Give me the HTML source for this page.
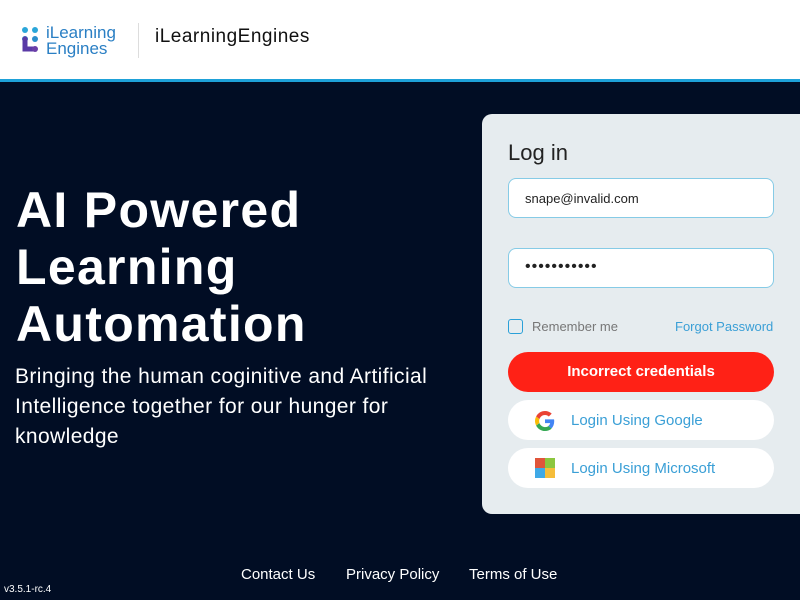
<!DOCTYPE html>
<html><head><meta charset="utf-8"><style>
*{margin:0;padding:0;box-sizing:border-box}
body{width:800px;height:600px;overflow:hidden;background:#010d24;font-family:"Liberation Sans",sans-serif;position:relative}
.hdr{position:absolute;left:0;top:0;width:800px;height:82px;background:#fff;border-bottom:3px solid #1ea1d8}
.abs{position:absolute}
.h1{left:16px;top:182px;color:#fff;font-weight:bold;font-size:50px;line-height:57px;letter-spacing:1.3px;white-space:nowrap}
.sub{left:15px;top:362px;color:#fff;font-size:21px;line-height:30px;width:445px;letter-spacing:0.4px}
.card{left:482px;top:114px;width:330px;height:400px;background:#e6ecef;border-radius:10px}
.inp{position:absolute;left:26px;width:266px;height:40px;background:#fff;border:1px solid #86cbe6;border-radius:8px;font-size:13px;color:#222;padding:12px 16px}
.btn{position:absolute;left:26px;width:266px;height:40px;border-radius:20px;font-size:15px}
</style></head><body>
<div class="hdr">
<svg class="abs" style="left:21px;top:27px" width="20" height="30" viewBox="0 0 20 30">
<circle cx="4" cy="3" r="3" fill="#2aa6d9"/><circle cx="14" cy="3" r="3" fill="#2aa6d9"/>
<circle cx="4" cy="12" r="3" fill="#2a7fc4"/><circle cx="14" cy="12" r="3" fill="#2a8fcc"/>
<path d="M4 12V22H14" stroke="#5a3aa6" stroke-width="5" fill="none" stroke-linecap="round"/>
<circle cx="14" cy="22" r="3" fill="#6b3fa8"/></svg>
<div class="abs" style="left:46px;top:25px;font-size:17px;line-height:16px;color:#2a7fc4">iLearning<br>Engines</div>
<div class="abs" style="left:138px;top:23px;width:1px;height:35px;background:#ddd"></div>
<div class="abs" style="left:155px;top:26px;font-size:19px;color:#111;letter-spacing:0.5px">iLearningEngines</div>
</div>
<div class="abs h1">AI Powered<br>Learning<br>Automation</div>
<div class="abs sub">Bringing the human coginitive and Artificial Intelligence together for our hunger for knowledge</div>
<div class="abs card">
<div class="abs" style="left:26px;top:26px;font-size:22px;color:#222">Log in</div>
<div class="inp" style="top:64px">snape@invalid.com</div>
<div class="inp" style="top:134px;font-size:16px;padding-top:9px;letter-spacing:1px">•••••••••••</div>
<div class="abs" style="left:26px;top:205px;width:15px;height:15px;border:1.5px solid #2aa0d8;border-radius:3px"></div>
<div class="abs" style="left:50px;top:205px;font-size:13px;color:#777">Remember me</div>
<div class="abs" style="left:193px;top:205px;font-size:13px;color:#3a9fd6">Forgot Password</div>
<div class="btn" style="top:238px;background:#ff2116;color:#fff;font-weight:bold;text-align:center;line-height:40px">Incorrect credentials</div>
<div class="btn" style="top:286px;background:#fff;color:#3a9fd6">
<svg class="abs" style="left:27px;top:11px" width="20" height="20" viewBox="0 0 48 48"><path fill="#EA4335" d="M24 9.5c3.5 0 6.7 1.2 9.2 3.6l6.9-6.9C35.9 2.4 30.4 0 24 0 14.6 0 6.6 5.4 2.7 13.3l8 6.2C12.6 13.6 17.9 9.5 24 9.5z"/><path fill="#4285F4" d="M46.1 24.5c0-1.6-.1-3.1-.4-4.5H24v9h12.4c-.5 2.9-2.2 5.4-4.7 7l7.6 5.9c4.4-4.1 6.8-10.1 6.8-17.4z"/><path fill="#FBBC05" d="M10.7 28.6c-.5-1.4-.8-3-.8-4.6s.3-3.2.8-4.6l-8-6.2C1 16.6 0 20.2 0 24s1 7.4 2.7 10.7l8-6.1z"/><path fill="#34A853" d="M24 48c6.5 0 11.9-2.1 15.9-5.8l-7.6-5.9c-2.1 1.4-4.9 2.3-8.3 2.3-6.1 0-11.4-4.1-13.3-9.7l-8 6.1C6.6 42.6 14.6 48 24 48z"/></svg>
<span class="abs" style="left:63px;top:12px">Login Using Google</span></div>
<div class="btn" style="top:334px;background:#fff;color:#3a9fd6">
<div class="abs" style="left:27px;top:10px;width:10px;height:10px;background:#e0553a"></div>
<div class="abs" style="left:37px;top:10px;width:10px;height:10px;background:#8cc63f"></div>
<div class="abs" style="left:27px;top:20px;width:10px;height:10px;background:#3fa9e6"></div>
<div class="abs" style="left:37px;top:20px;width:10px;height:10px;background:#f5bd3a"></div>
<span class="abs" style="left:63px;top:12px">Login Using Microsoft</span></div>
</div>
<div class="abs" style="left:241px;top:566px;font-size:15px;color:#fff">Contact Us</div>
<div class="abs" style="left:346px;top:566px;font-size:15px;color:#fff">Privacy Policy</div>
<div class="abs" style="left:469px;top:566px;font-size:15px;color:#fff">Terms of Use</div>
<div class="abs" style="left:4px;top:584px;font-size:10px;color:#fff">v3.5.1-rc.4</div>
</body></html>
